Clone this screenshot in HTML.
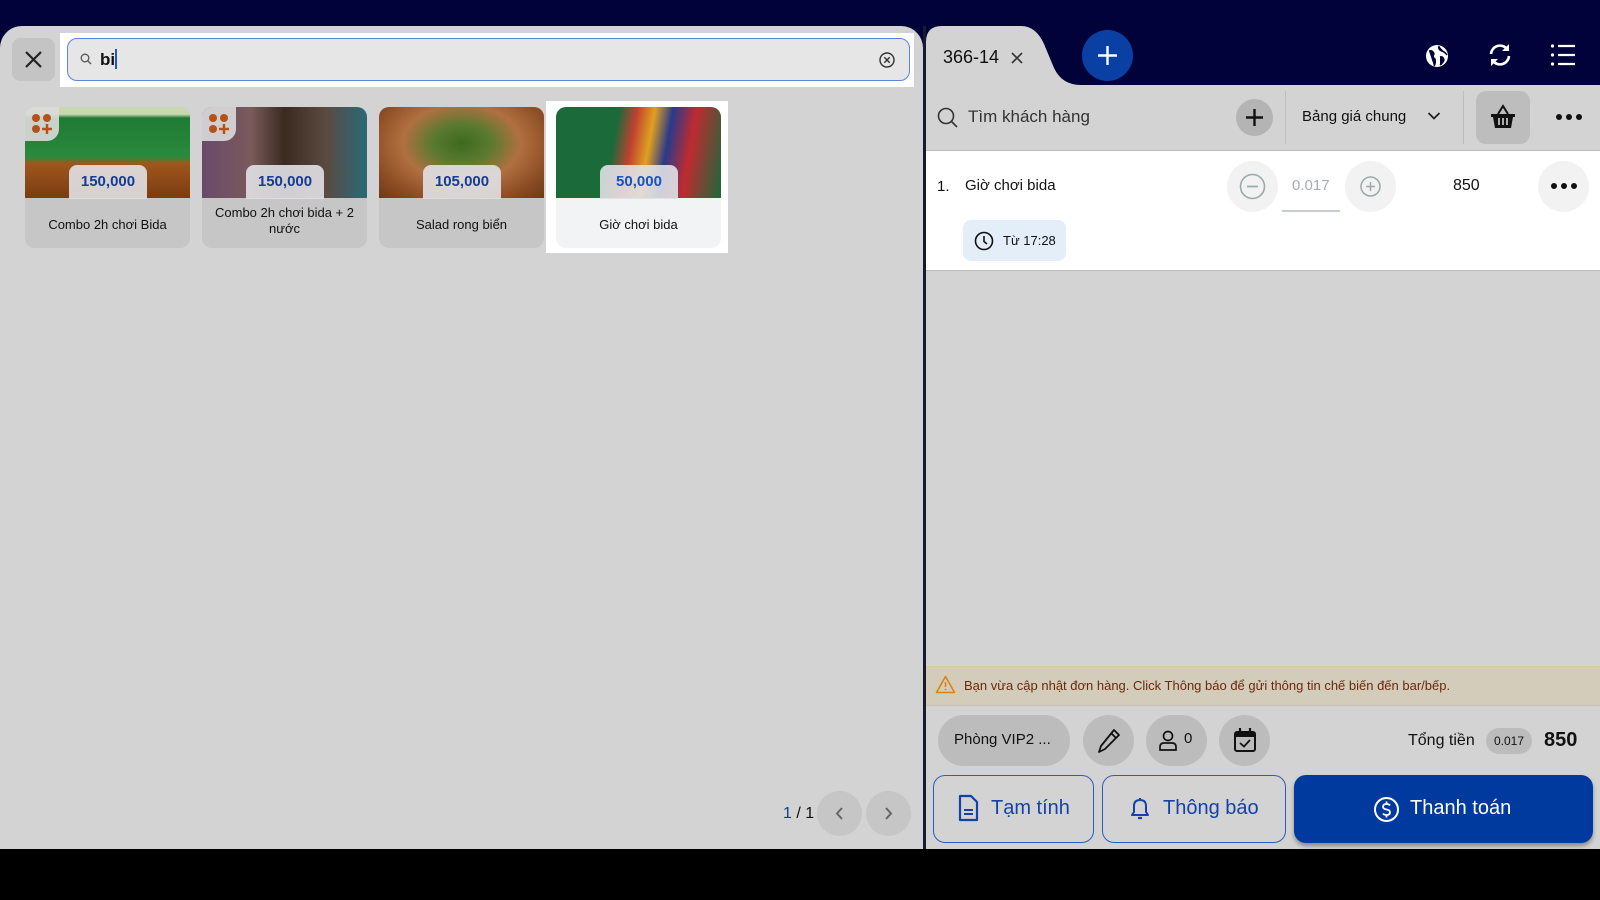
<!DOCTYPE html>
<html><head><meta charset="utf-8"><style>
*{box-sizing:border-box;margin:0;padding:0}
body{width:1600px;height:900px;overflow:hidden;background:#000;font-family:"Liberation Sans","Noto Sans CJK SC",sans-serif;position:relative}
.abs{position:absolute}
.navy{left:0;top:0;width:1600px;height:849px;background:#01023a}
.left{left:0;top:26px;width:923px;height:823px;background:#d3d3d3;border-radius:22px 22px 0 0}
.divider{left:923px;top:26px;width:3px;height:823px;background:#1a1a2e}
.right{left:926px;top:85px;width:674px;height:764px;background:#d3d3d3}
.card{position:absolute;top:107px;width:165px;height:141px;background:#c6c6c6;border-radius:10px;overflow:hidden}
.card .img{position:absolute;left:0;top:0;width:100%;height:91px}
.card .price{position:absolute;left:44px;top:58px;width:78px;height:34px;background:rgba(225,225,230,.9);border-radius:8px 8px 0 0;color:#173c93;font-weight:bold;font-size:15px;text-align:center;line-height:34px}
.card .name{position:absolute;left:4px;right:4px;top:98px;text-align:center;font-size:13px;color:#111;line-height:16px}
.combo{position:absolute;left:0;top:0;width:34px;height:34px;background:rgba(220,220,220,.9);border-radius:0 0 12px 0}
.circ{position:absolute;border-radius:50%}
.t{position:absolute;white-space:nowrap}
</style></head><body>
<div class="abs navy"></div>
<div class="abs left"></div>
<div class="abs divider"></div>

<!-- close -->
<div class="abs" style="left:12px;top:38px;width:43px;height:43px;background:#c4c4c4;border-radius:8px"></div>
<svg class="abs" style="left:22px;top:48px" width="23" height="23" viewBox="0 0 23 23"><path d="M4 4L19 19M19 4L4 19" stroke="#222" stroke-width="2.2"/></svg>
<div class="abs" style="left:60px;top:33px;width:854px;height:54px;background:#fff"></div>
<div class="abs" style="left:67px;top:38px;width:843px;height:43px;background:#e6e6e6;border:1.5px solid #5a86d8;border-radius:10px"></div>
<svg class="abs" style="left:80px;top:53px" width="12" height="12" viewBox="0 0 12 12"><circle cx="5" cy="5" r="3.8" fill="none" stroke="#555" stroke-width="1.3"/><path d="M8 8L11 11" stroke="#555" stroke-width="1.3"/></svg>
<div class="t" style="left:100px;top:49px;font-size:17px;font-weight:bold;color:#111">bi<span style="display:inline-block;width:2px;height:20px;background:#1f55c8;vertical-align:-4px"></span></div>
<svg class="abs" style="left:878px;top:51px" width="18" height="18" viewBox="0 0 18 18"><circle cx="9" cy="9" r="7" fill="none" stroke="#333" stroke-width="1.4"/><path d="M6.3 6.3L11.7 11.7M11.7 6.3L6.3 11.7" stroke="#333" stroke-width="1.4"/></svg>

<!-- cards -->
<div class="abs" style="left:546px;top:101px;width:182px;height:152px;background:#fff"></div>
<div class="card" style="left:25px"><div class="img" style="background:linear-gradient(180deg,#c8d8b0 0,#c8d8b0 8%,#1f7a35 12%,#2a8a3c 55%,#a0561d 62%,#7a3c12 100%)"></div><div class="combo"><svg width="34" height="34" viewBox="0 0 34 34"><circle cx="11" cy="11" r="4" fill="#b5521a"/><circle cx="22" cy="11" r="4" fill="#b5521a"/><circle cx="11" cy="22" r="4" fill="#b5521a"/><path d="M22 17V27M17 22H27" stroke="#b5521a" stroke-width="2.5"/></svg></div><div class="price">150,000</div><div class="name" style="top:110px">Combo 2h chơi Bida</div></div>
<div class="card" style="left:202px"><div class="img" style="background:linear-gradient(90deg,#6a4a6a 0,#7a5a5a 30%,#3a2a20 50%,#5a4a40 75%,#2a6a78 100%)"></div><div class="combo"><svg width="34" height="34" viewBox="0 0 34 34"><circle cx="11" cy="11" r="4" fill="#b5521a"/><circle cx="22" cy="11" r="4" fill="#b5521a"/><circle cx="11" cy="22" r="4" fill="#b5521a"/><path d="M22 17V27M17 22H27" stroke="#b5521a" stroke-width="2.5"/></svg></div><div class="price">150,000</div><div class="name">Combo 2h chơi bida + 2 nước</div></div>
<div class="card" style="left:379px"><div class="img" style="background:radial-gradient(ellipse at 50% 40%,#3d6a20 0,#5a7a30 25%,#b07040 50%,#8a4a22 80%,#6a3a1a 100%)"></div><div class="price">105,000</div><div class="name" style="top:110px">Salad rong biển</div></div>
<div class="card" style="left:556px;background:#f2f3f5"><div class="img" style="background:linear-gradient(100deg,#1a6a3a 0,#1a6a3a 35%,#c04030 45%,#e0a020 55%,#2a3a8a 65%,#c02a30 78%,#1a6a3a 100%)"></div><div class="price" style="color:#1a52c0">50,000</div><div class="name" style="top:110px">Giờ chơi bida</div></div>

<!-- pagination -->
<div class="t" style="left:783px;top:805px;font-size:16px;color:#111"><span style="color:#173c93">1</span> / 1</div>
<div class="circ" style="left:817px;top:791px;width:45px;height:45px;background:#c6c6c6"></div>
<div class="circ" style="left:866px;top:791px;width:45px;height:45px;background:#c6c6c6"></div>
<svg class="abs" style="left:832px;top:806px" width="15" height="15" viewBox="0 0 15 15"><path d="M10 2L5 7.5L10 13" fill="none" stroke="#666" stroke-width="2"/></svg>
<svg class="abs" style="left:881px;top:806px" width="15" height="15" viewBox="0 0 15 15"><path d="M5 2L10 7.5L5 13" fill="none" stroke="#666" stroke-width="2"/></svg>

<!-- right tab -->
<svg class="abs" style="left:926px;top:26px" width="160" height="60" viewBox="0 0 160 60"><path d="M0 60V16Q0 0 16 0H95Q110 0 118 18L128 42Q136 59 155 59H160V60Z" fill="#d3d3d3"/></svg>
<div class="t" style="left:943px;top:47px;font-size:18px;color:#111">366-14</div>
<svg class="abs" style="left:1010px;top:51px" width="14" height="14" viewBox="0 0 14 14"><path d="M2 2L12 12M12 2L2 12" stroke="#333" stroke-width="1.6"/></svg>
<div class="circ" style="left:1082px;top:30px;width:51px;height:51px;background:#0a3fa3"></div>
<svg class="abs" style="left:1096px;top:44px" width="23" height="23" viewBox="0 0 23 23"><path d="M11.5 2V21M2 11.5H21" stroke="#fff" stroke-width="2.4"/></svg>
<svg class="abs" style="left:1424px;top:43px" width="26" height="26" viewBox="0 0 26 26"><circle cx="13" cy="13" r="11" fill="#fff"/><path d="M5 8Q9 7 10 11Q8 14 11 16Q12 20 10 23M15 3Q14 7 18 8Q21 9 23 12M16 14Q19 13 20 17Q19 20 16 22" fill="#01023a" stroke="#01023a" stroke-width="1.5"/></svg>
<svg class="abs" style="left:1487px;top:42px" width="26" height="26" viewBox="0 0 26 26"><path d="M4 12A9 9 0 0 1 20 7M22 14A9 9 0 0 1 6 19" fill="none" stroke="#fff" stroke-width="2.6"/><path d="M22 2V9H15Z M4 24V17H11Z" fill="#fff"/></svg>
<svg class="abs" style="left:1550px;top:43px" width="26" height="24" viewBox="0 0 26 24"><path d="M8 3H25M8 12H25M8 21H25" stroke="#fff" stroke-width="2.2"/><circle cx="2.5" cy="3" r="1.6" fill="#fff"/><circle cx="2.5" cy="12" r="1.6" fill="#fff"/><circle cx="2.5" cy="21" r="1.6" fill="#fff"/></svg>

<!-- right body -->
<div class="abs right"></div>
<svg class="abs" style="left:937px;top:107px" width="22" height="22" viewBox="0 0 22 22"><circle cx="9" cy="9" r="7.5" fill="none" stroke="#333" stroke-width="1.6"/><path d="M14.5 14.5L20 20" stroke="#333" stroke-width="1.6"/></svg>
<div class="t" style="left:968px;top:107px;font-size:17px;color:#333">Tìm khách hàng</div>
<div class="circ" style="left:1236px;top:99px;width:37px;height:37px;background:#b4b4b4"></div>
<svg class="abs" style="left:1245px;top:108px" width="19" height="19" viewBox="0 0 19 19"><path d="M9.5 1V18M1 9.5H18" stroke="#111" stroke-width="2.4"/></svg>
<div class="abs" style="left:1285px;top:91px;width:1px;height:53px;background:#bdbdbd"></div>
<div class="t" style="left:1302px;top:108px;font-size:15px;color:#111">Bảng giá chung</div>
<svg class="abs" style="left:1427px;top:111px" width="14" height="10" viewBox="0 0 14 10"><path d="M1.5 2L7 7.5L12.5 2" fill="none" stroke="#222" stroke-width="1.8"/></svg>
<div class="abs" style="left:1463px;top:91px;width:1px;height:53px;background:#bdbdbd"></div>
<div class="abs" style="left:1476px;top:91px;width:54px;height:53px;background:#bdbdbd;border-radius:10px"></div>
<svg class="abs" style="left:1489px;top:103px" width="28" height="28" viewBox="0 0 28 28"><path d="M9 11L14 3L19 11" fill="none" stroke="#111" stroke-width="2"/><path d="M2 11H26V14H24L22 25H6L4 14H2Z" fill="#111"/><path d="M10 15V22M14 15V22M18 15V22" stroke="#bdbdbd" stroke-width="1.8"/></svg>
<svg class="abs" style="left:1555px;top:113px" width="28" height="8" viewBox="0 0 28 8"><circle cx="4" cy="4" r="3" fill="#111"/><circle cx="14" cy="4" r="3" fill="#111"/><circle cx="24" cy="4" r="3" fill="#111"/></svg>

<div class="abs" style="left:926px;top:150px;width:674px;height:121px;background:#fff;border-top:1px solid #bbb;border-bottom:1px solid #bbb"></div>
<div class="t" style="left:937px;top:178px;font-size:15px;color:#111">1.</div>
<div class="t" style="left:965px;top:177px;font-size:15px;color:#111">Giờ chơi bida</div>
<div class="circ" style="left:1227px;top:161px;width:51px;height:51px;background:#f2f2f2"></div>
<svg class="abs" style="left:1239px;top:173px" width="27" height="27" viewBox="0 0 27 27"><circle cx="13.5" cy="13.5" r="12" fill="none" stroke="#9aa" stroke-width="1.6"/><path d="M8 13.5H19" stroke="#9aa" stroke-width="1.8"/></svg>
<div class="t" style="left:1292px;top:177px;font-size:15px;color:#a8acb4">0.017</div>
<div class="abs" style="left:1282px;top:210px;width:58px;height:1.5px;background:#c8ccd4"></div>
<div class="circ" style="left:1345px;top:161px;width:51px;height:51px;background:#f2f2f2"></div>
<svg class="abs" style="left:1360px;top:176px" width="21" height="21" viewBox="0 0 21 21"><circle cx="10.5" cy="10.5" r="9.5" fill="none" stroke="#9aa" stroke-width="1.5"/><path d="M10.5 6V15M6 10.5H15" stroke="#9aa" stroke-width="1.5"/></svg>
<div class="t" style="left:1453px;top:177px;font-size:16px;color:#111">850</div>
<div class="circ" style="left:1538px;top:161px;width:51px;height:51px;background:#f2f2f2"></div>
<svg class="abs" style="left:1550px;top:182px" width="28" height="8" viewBox="0 0 28 8"><circle cx="4" cy="4" r="3" fill="#111"/><circle cx="14" cy="4" r="3" fill="#111"/><circle cx="24" cy="4" r="3" fill="#111"/></svg>
<div class="abs" style="left:963px;top:220px;width:103px;height:41px;background:#e4eef9;border-radius:8px"></div>
<svg class="abs" style="left:974px;top:231px" width="20" height="20" viewBox="0 0 20 20"><circle cx="10" cy="10" r="8.5" fill="none" stroke="#111" stroke-width="1.6"/><path d="M10 5V10.5L13 13" fill="none" stroke="#111" stroke-width="1.6"/></svg>
<div class="t" style="left:1003px;top:233px;font-size:13px;color:#111">Từ 17:28</div>

<!-- warning -->
<div class="abs" style="left:926px;top:666px;width:674px;height:40px;background:#d4ccbb;border-top:1px solid #dcc89a;border-bottom:1px solid #c9c2b8"></div>
<svg class="abs" style="left:935px;top:675px" width="21" height="19" viewBox="0 0 21 19"><path d="M10.5 1.5L19.5 17.5H1.5Z" fill="none" stroke="#d9821a" stroke-width="1.6" stroke-linejoin="round"/><path d="M10.5 7V12" stroke="#d9821a" stroke-width="1.6"/><circle cx="10.5" cy="14.5" r=".9" fill="#d9821a"/></svg>
<div class="t" style="left:964px;top:678px;font-size:13px;color:#6a2a0a">Bạn vừa cập nhật đơn hàng. Click Thông báo để gửi thông tin chế biến đến bar/bếp.</div>

<!-- bottom row -->
<div class="abs" style="left:938px;top:715px;width:132px;height:51px;background:#bcbcbc;border-radius:26px"></div>
<div class="t" style="left:954px;top:731px;font-size:15px;color:#111">Phòng VIP2 ...</div>
<div class="circ" style="left:1083px;top:715px;width:51px;height:51px;background:#bcbcbc"></div>
<svg class="abs" style="left:1097px;top:728px" width="24" height="26" viewBox="0 0 24 26"><path d="M17 2L22 7L8 21L2 24L4 18Z M14 5L19 10" fill="none" stroke="#111" stroke-width="1.8" stroke-linejoin="round"/></svg>
<div class="abs" style="left:1146px;top:715px;width:61px;height:51px;background:#bcbcbc;border-radius:26px"></div>
<svg class="abs" style="left:1157px;top:729px" width="22" height="22" viewBox="0 0 22 22"><circle cx="11" cy="7" r="4.5" fill="none" stroke="#111" stroke-width="1.7"/><path d="M3 21V18Q3 14 7 14H15Q19 14 19 18V21Z" fill="none" stroke="#111" stroke-width="1.7"/></svg>
<div class="t" style="left:1184px;top:730px;font-size:15px;color:#111">0</div>
<div class="circ" style="left:1219px;top:715px;width:51px;height:51px;background:#bcbcbc"></div>
<svg class="abs" style="left:1233px;top:727px" width="24" height="26" viewBox="0 0 24 26"><rect x="2" y="5" width="20" height="19" rx="2" fill="none" stroke="#111" stroke-width="2"/><path d="M2 6H22V10H2Z" fill="#111"/><path d="M7 1V6M17 1V6" stroke="#111" stroke-width="2.2"/><path d="M7 16L11 19.5L17 13" fill="none" stroke="#111" stroke-width="1.8"/></svg>
<div class="t" style="left:1408px;top:732px;font-size:16px;color:#111">Tổng tiền</div>
<div class="abs" style="left:1486px;top:728px;width:46px;height:26px;background:#bcbcbc;border-radius:13px;font-size:12px;color:#111;text-align:center;line-height:26px">0.017</div>
<div class="t" style="left:1544px;top:729px;font-size:20px;font-weight:bold;color:#111">850</div>

<div class="abs" style="left:933px;top:775px;width:161px;height:68px;border:1.5px solid #2d5cc0;border-radius:12px"></div>
<svg class="abs" style="left:957px;top:794px" width="22" height="28" viewBox="0 0 22 28"><path d="M3 2H14L20 8V26H3Z" fill="none" stroke="#1542a8" stroke-width="2.2" stroke-linejoin="round"/><path d="M7 16H16M7 20H16" stroke="#1542a8" stroke-width="2"/></svg>
<div class="t" style="left:991px;top:797px;font-size:20px;color:#1542a8;font-weight:500">Tạm tính</div>
<div class="abs" style="left:1102px;top:775px;width:184px;height:68px;border:1.5px solid #2d5cc0;border-radius:12px"></div>
<svg class="abs" style="left:1129px;top:796px" width="22" height="26" viewBox="0 0 22 26"><path d="M3 19H19L17 16V10Q17 4 11 4Q5 4 5 10V16Z" fill="none" stroke="#1542a8" stroke-width="2" stroke-linejoin="round"/><path d="M9 22H13" stroke="#1542a8" stroke-width="2.2"/><path d="M11 2V4" stroke="#1542a8" stroke-width="2"/></svg>
<div class="t" style="left:1163px;top:797px;font-size:20px;color:#1542a8;font-weight:500">Thông báo</div>
<div class="abs" style="left:1294px;top:775px;width:299px;height:68px;background:#003a9e;border-radius:12px;box-shadow:0 3px 4px rgba(0,0,0,.35)"></div>
<svg class="abs" style="left:1373px;top:796px" width="27" height="27" viewBox="0 0 27 27"><circle cx="13.5" cy="13.5" r="11.5" fill="none" stroke="#fff" stroke-width="2"/><path d="M17 9.5Q16 8 13.5 8Q10 8 10 10.8Q10 13 13.5 13.5Q17 14 17 16.4Q17 19 13.5 19Q11 19 10 17.5M13.5 5.5V8M13.5 19V21.5" fill="none" stroke="#fff" stroke-width="1.8"/></svg>
<div class="t" style="left:1410px;top:797px;font-size:20px;color:#fff;font-weight:500">Thanh toán</div>
</body></html>
